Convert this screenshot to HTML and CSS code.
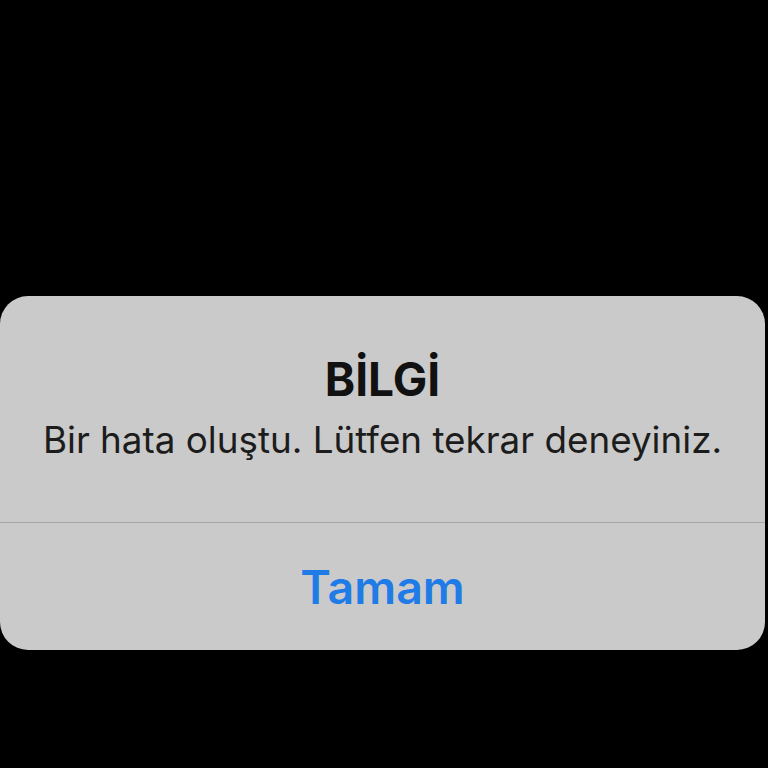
FILE: index.html
```html
<!DOCTYPE html>
<html lang="tr">
<head>
<meta charset="utf-8">
<link rel="stylesheet" href="styles.css">
</head>
<body>
<div class="alert">
  <div class="alert-body">
    <div class="alert-title">BİLGİ</div>
    <div class="alert-message">Bir hata oluştu. Lütfen tekrar deneyiniz.</div>
  </div>
  <div class="alert-actions">
    <div class="alert-button">Tamam</div>
  </div>
</div>
</body>
</html>
```
FILE: styles.css
```css
html, body {
  margin: 0;
  padding: 0;
  background: #000;
  width: 768px;
  height: 768px;
  overflow: hidden;
}
body {
  font-family: "Inter", "Liberation Sans", sans-serif;
}
.alert {
  margin-top: 296px;
  margin-left: 0;
  width: 765px;
  height: 354px;
  background: #cacaca;
  border-radius: 28px;
  display: flex;
  flex-direction: column;
  overflow: hidden;
}
.alert-body {
  height: 227px;
  box-sizing: border-box;
  padding-top: 55px;
  border-bottom: 1.5px solid #a6a6a6;
  text-align: center;
  color: #111;
}
.alert-title {
  font-size: 46px;
  font-weight: 700;
  line-height: 56px;
}
.alert-message {
  font-size: 36.8px;
  font-weight: 400;
  line-height: 50px;
  margin-top: 8px;
  color: #1c1c1c;
}
.alert-actions {
  flex: 1;
  display: flex;
  align-items: center;
  justify-content: center;
}
.alert-button {
  font-size: 46.5px;
  font-weight: 600;
  color: #1f7be6;
  line-height: 56px;
}
```
